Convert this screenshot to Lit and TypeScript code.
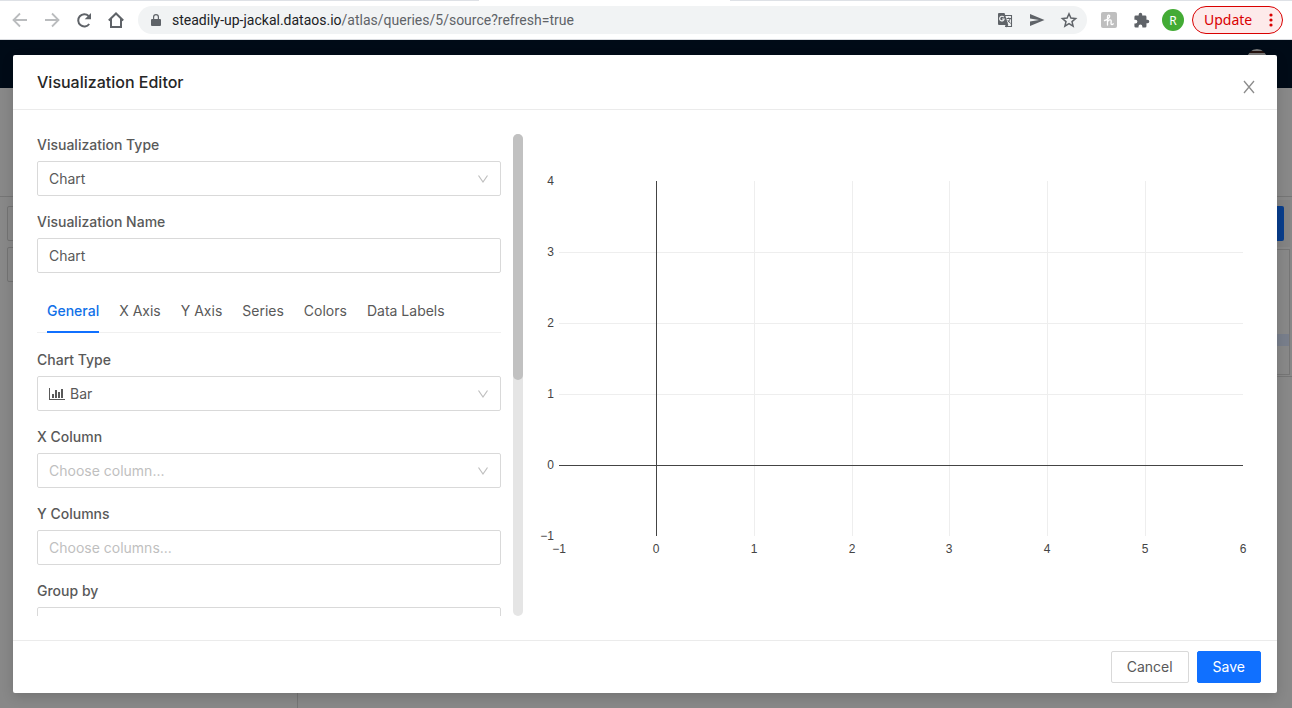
import { LitElement, html, svg, css } from "lit";
import { customElement, state } from "lit/decorators.js";

@customElement("browser-bar")
class BrowserBar extends LitElement {
  static styles = css`
    :host {
      display: block;
      font-family: "Noto Sans", sans-serif;
    }
    .bar {
      box-sizing: border-box;
      height: 40px;
      display: flex;
      align-items: center;
      padding: 1px 9px 0 10px;
      background: linear-gradient(90deg, #dee1e6 479px, #fff 479px 730px, #dee1e6 730px) 0 0 / 100% 1px no-repeat #fff;
      border-bottom: 1px solid #dadce0;
    }
    button {
      border: 0;
      background: none;
      padding: 0;
      margin: 0;
      font: inherit;
      color: #5f6368;
      display: flex;
      align-items: center;
      justify-content: center;
    }
    .nav {
      display: flex;
      gap: 12px;
    }
    .nav button,
    .tools button {
      width: 20px;
      height: 20px;
    }
    .nav .off {
      color: #babcbe;
    }
    .omnibox {
      flex: 1;
      min-width: 0;
      height: 28px;
      margin-left: 12px;
      border-radius: 14px;
      background: #f1f3f4;
      display: flex;
      align-items: center;
      padding: 0 8px 0 12px;
    }
    .url {
      flex: 1;
      min-width: 0;
      margin-left: 10px;
      font-family: Roboto, sans-serif;
      font-size: 14px;
      line-height: 20px;
      color: #5f6368;
      white-space: nowrap;
      overflow: hidden;
      text-decoration: none;
    }
    .host {
      color: #202124;
    }
    .actions {
      display: flex;
      gap: 12px;
    }
    .actions button {
      width: 20px;
      height: 20px;
    }
    .tools {
      display: flex;
      align-items: center;
      gap: 12px;
      margin-left: 12px;
    }
    .tools .avatar {
      width: 22px;
      height: 22px;
      margin-left: -1px;
      border-radius: 50%;
      background: #43ab35;
      color: #fff;
      font-size: 12px;
    }
    .tools .update {
      box-sizing: border-box;
      width: 91px;
      height: 28px;
      margin-left: -4px;
      padding: 0 9px 0 11px;
      justify-content: space-between;
      border: 1px solid #d90000;
      border-radius: 14px;
      background: #fdeaea;
      color: #d90000;
      font-size: 14px;
      line-height: 18px;
    }
  `;

  render() {
    return html`
      <div class="bar">
        <div class="nav">
          <button class="off" aria-label="Back">
            <svg width="20" height="20" viewBox="0 0 20 20" fill="none" stroke="currentColor" stroke-width="1.8"><path d="M17 10H4M10 3.5 3.5 10l6.500 6.500" /></svg>
          </button>
          <button class="off" aria-label="Forward">
            <svg width="20" height="20" viewBox="0 0 20 20" fill="none" stroke="currentColor" stroke-width="1.8"><path d="M3 10h13M10 3.500 16.500 10 10 16.500" /></svg>
          </button>
          <button aria-label="Reload">
            <svg width="20" height="20" viewBox="0 0 20 20"><path d="M15.200 14A6.100 6.100 0 1 1 14.600 6" fill="none" stroke="currentColor" stroke-width="2" /><path d="M17 3v6.300h-6.300z" fill="currentColor" /></svg>
          </button>
          <button aria-label="Home">
            <svg width="20" height="20" viewBox="0 0 20 20" fill="none" stroke="currentColor" stroke-width="2"><path d="M2.800 10.500 10 3.500l7.200 7M5 9v8h10V9" /></svg>
          </button>
        </div>
        <div class="omnibox">
          <svg width="12" height="14" viewBox="0 0 12 14" fill="#5f6368"><path d="M3 6V4a3 3 0 0 1 6 0v2h1a1 1 0 0 1 1 1v5a1 1 0 0 1-1 1H2a1 1 0 0 1-1-1V7a1 1 0 0 1 1-1zm1.200 0h3.600V4a1.800 1.800 0 0 0-3.600 0z" /></svg>
          <a class="url" href="#"><span class="host">steadily-up-jackal.dataos.io</span>/atlas/queries/5/source?refresh=true</a>
          <div class="actions">
            <button aria-label="Translate">
              <svg width="20" height="20" viewBox="0 0 20 20"><path d="M10 5.500h6.500v11H10" fill="none" stroke="currentColor" stroke-width="1.100" /><path d="M4 3h5.500l3.800 12H4a1 1 0 0 1-1-1V4a1 1 0 0 1 1-1zM10 15h3.300l-1.600 2.500z" fill="currentColor" /><path d="M8.800 7.200a2.300 2.300 0 1 0 .4 1.800H7" fill="none" stroke="#f1f3f4" stroke-width="1.200" /><path d="M11.600 8.500h4.400M13.700 7.500v1M15.200 8.500c-.3 1.700-1.300 2.900-2.400 3.900M12.700 10l2.800 3.500" fill="none" stroke="currentColor" /></svg>
            </button>
            <button aria-label="Send to device">
              <svg width="20" height="20" viewBox="0 0 20 20" fill="currentColor"><path d="M3 4 17.500 10 3 16v-4.600L12 10 3 8.600z" /></svg>
            </button>
            <button aria-label="Bookmark">
              <svg width="20" height="20" viewBox="0 0 20 20" fill="none" stroke="currentColor" stroke-width="1.500"><path d="m10 3.800 1.900 4.300 4.700.4-3.600 3.100 1.100 4.600-4.100-2.500-4.100 2.500L7 11.600 3.400 8.500l4.700-.4z" /></svg>
            </button>
          </div>
        </div>
        <div class="tools">
          <button aria-label="Honey">
            <svg width="16" height="16" viewBox="0 0 16 16"><rect width="16" height="16" rx="2" fill="#bfbfbf" /><path d="M3.500 8.500C6 8 8.800 6 8.700 4 8.500 2.600 6.500 2.800 6.500 5v8M6.600 9.800c.6-2.200 3.700-2.800 3.600-.6l-.2 2.300c0 1.400 1.600 1.300 2.200.3" fill="none" stroke="#fff" stroke-width="1.300" stroke-linecap="round" /></svg>
          </button>
          <button aria-label="Extensions">
            <svg width="17" height="17" viewBox="0 0 24 24" fill="currentColor"><path d="M20.500 11H19V7a2 2 0 0 0-2-2h-4V3.500a2.500 2.500 0 0 0-5 0V5H4a2 2 0 0 0-2 2v3.800h1.500a2.700 2.700 0 0 1 0 5.400H2V20a2 2 0 0 0 2 2h3.800v-1.500a2.700 2.700 0 0 1 5.400 0V22H17a2 2 0 0 0 2-2v-4h1.500a2.500 2.500 0 0 0 0-5z" /></svg>
          </button>
          <button class="avatar" aria-label="Profile">R</button>
          <button class="update">
            Update
            <svg width="4" height="14" viewBox="0 0 4 14" fill="currentColor"><circle cx="2" cy="2" r="1.600" /><circle cx="2" cy="7" r="1.600" /><circle cx="2" cy="12" r="1.600" /></svg>
          </button>
        </div>
      </div>
    `;
  }
}

@customElement("query-page")
class QueryPage extends LitElement {
  static styles = css`
    :host {
      display: flex;
      flex-direction: column;
      background: #888;
    }
    .navbar {
      height: 48px;
      background: #000b17;
      display: flex;
      justify-content: flex-end;
      align-items: flex-start;
      padding: 9px 25px 0 0;
      box-sizing: border-box;
    }
    .user {
      width: 20px;
      height: 20px;
      border-radius: 50%;
      background: linear-gradient(#777 2px, #24130f 2px 4px, #777 4px);
    }
    .title {
      height: 108px;
      border-bottom: 1px solid #757575;
    }
    .work {
      flex: 1;
      display: grid;
      grid-template-columns: 298px 1fr;
    }
    .schema {
      box-sizing: border-box;
      border-right: 1px solid #757575;
      padding: 9px 7px;
      display: flex;
      flex-direction: column;
      gap: 6px;
    }
    .field {
      box-sizing: border-box;
      height: 35px;
      border: 1px solid #737373;
      border-radius: 2px;
    }
    .actions {
      display: flex;
      justify-content: flex-end;
      margin: 3px 2px 2px 0;
      padding: 6px;
      background: #838383;
    }
    .run {
      width: 70px;
      height: 35px;
      border-radius: 2px;
      background: #083d8c;
    }
    .code {
      box-sizing: border-box;
      height: 126px;
      margin-right: 2px;
      border: 1px solid #757575;
      padding-top: 84px;
    }
    .line {
      height: 12px;
      background: #787e8b;
    }
    .results {
      margin-top: 1px;
      border-top: 1px solid #757575;
    }
  `;

  render() {
    return html`
      <div class="navbar"><div class="user"></div></div>
      <div class="title"></div>
      <div class="work">
        <div class="schema">
          <div class="field"></div>
          <div class="field"></div>
        </div>
        <div>
          <div class="actions"><div class="run"></div></div>
          <div class="code"><div class="line"></div></div>
          <div class="results"></div>
        </div>
      </div>
    `;
  }
}

@customElement("chart-preview")
class ChartPreview extends LitElement {
  static styles = css`
    :host {
      display: block;
      min-width: 0;
    }
    svg {
      display: block;
      width: 100%;
      height: 450px;
    }
    .grid {
      stroke: #eee;
      shape-rendering: crispEdges;
    }
    .zero {
      stroke: #444;
      shape-rendering: crispEdges;
    }
    .tick {
      font: 12px "Liberation Sans", sans-serif;
      fill: #444;
    }
    .x {
      text-anchor: middle;
    }
    .y {
      text-anchor: end;
    }
  `;

  @state() private width = 730;

  private observer = new ResizeObserver(([entry]) => {
    this.width = Math.round(entry.contentRect.width);
  });

  connectedCallback() {
    super.connectedCallback();
    this.observer.observe(this);
  }

  disconnectedCallback() {
    this.observer.disconnect();
    super.disconnectedCallback();
  }

  render() {
    const left = 36;
    const right = this.width - 10;
    const top = 47;
    const bottom = 402;
    const x = (v: number) => left + Math.floor(((v + 1) / 7) * (right - left));
    const y = (v: number) => Math.round(bottom - ((v + 1) / 5) * (bottom - top));
    const label = (v: number) => String(v).replace("-", "\u2212");
    const vline = (v: number, kind: string) =>
      svg`<line class=${kind} x1=${x(v)} x2=${x(v)} y1=${top} y2=${bottom} />`;
    const hline = (v: number, kind: string) =>
      svg`<line class=${kind} x1=${left} x2=${right} y1=${y(v) + 0.5} y2=${y(v) + 0.5} />`;
    return html`
      <svg role="img" aria-label="Chart preview">
        ${[1, 2, 3, 4, 5].map((v) => vline(v, "grid"))}
        ${[1, 2, 3].map((v) => hline(v, "grid"))}
        ${vline(0, "zero")} ${hline(0, "zero")}
        ${[-1, 0, 1, 2, 3, 4, 5, 6].map(
          (v) => svg`<text class="tick x" x=${x(v)} y=${bottom + 17}>${label(v)}</text>`
        )}
        ${[-1, 0, 1, 2, 3, 4].map(
          (v) => svg`<text class="tick y" x=${left - 5} y=${y(v) + 4}>${label(v)}</text>`
        )}
      </svg>
    `;
  }
}

const chevron = html`<svg class="chevron" width="12" height="12" viewBox="0 0 12 12" fill="none" stroke="#bfbfbf" stroke-width="1.200"><path d="m1.500 2.500 4.500 6.500 4.500-6.500" /></svg>`;

const barIcon = html`<svg class="kind" width="16" height="14" viewBox="0 0 16 14" fill="#595959"><path d="M0 1h1v11h15v1H0zM3 7h2v4H3zM6 3h2v8H6zM9 5h2v6H9zM12 2h2v9h-2z" /></svg>`;

@customElement("visualization-editor")
class VisualizationEditor extends LitElement {
  static styles = css`
    :host {
      display: flex;
      flex-direction: column;
      background: #fff;
      border-radius: 2px;
      box-shadow: 0 4px 12px rgba(0, 0, 0, 0.15);
      font: 14px/21px Inter, sans-serif;
      color: #595959;
    }
    header {
      display: flex;
      align-items: center;
      justify-content: space-between;
      height: 54px;
      padding: 0 22px 0 24px;
      border-bottom: 1px solid #ebebeb;
    }
    h1 {
      margin: 0;
      font-size: 16px;
      line-height: 22px;
      font-weight: 500;
      color: #262626;
    }
    button {
      font: inherit;
      color: inherit;
      margin: 0;
      padding: 0;
      border: 0;
      background: none;
    }
    .close {
      display: flex;
      padding-top: 9px;
    }
    .body {
      flex: 1;
      min-height: 0;
      display: grid;
      grid-template-columns: 2fr 3fr;
      padding: 24px;
    }
    .left {
      min-height: 0;
      display: grid;
      grid-template-columns: 1fr 10px;
      grid-template-rows: minmax(0, 1fr);
      gap: 12px;
    }
    .form {
      overflow-y: auto;
      scrollbar-width: none;
    }
    .track {
      border-radius: 5px;
      background: #e5e5e5;
    }
    .thumb {
      height: 51%;
      border-radius: 5px;
      background: #c1c1c1;
    }
    .item {
      display: grid;
      gap: 6px;
      margin-bottom: 15px;
    }
    label {
      font-weight: 500;
    }
    .control {
      display: grid;
      align-items: center;
    }
    .control > * {
      grid-area: 1 / 1;
    }
    input,
    select {
      appearance: none;
      box-sizing: border-box;
      width: 100%;
      height: 35px;
      margin: 0;
      padding: 0 11px;
      border: 1px solid #d9d9d9;
      border-radius: 2px;
      background: #fff;
      font: inherit;
      color: #595959;
      outline: 0;
    }
    .with-icon {
      padding-left: 32px;
    }
    .empty,
    input::placeholder {
      color: #bfbfbf;
    }
    .chevron {
      justify-self: end;
      margin-right: 12px;
      pointer-events: none;
    }
    .kind {
      margin-left: 12px;
      pointer-events: none;
    }
    .tabs {
      display: flex;
      gap: 20px;
      padding-left: 10px;
      margin-bottom: 16px;
      box-shadow: inset 0 -1px #f0f0f0;
    }
    .tab {
      padding: 12px 0;
      white-space: nowrap;
    }
    .active {
      color: #1070e8;
      font-weight: 500;
      box-shadow: inset 0 -2px #1070ff;
    }
    footer {
      display: flex;
      justify-content: flex-end;
      gap: 8px;
      padding: 10px 16px;
      border-top: 1px solid #ebebeb;
    }
    .btn {
      box-sizing: border-box;
      height: 32px;
      padding: 0 15px;
      border: 1px solid #d9d9d9;
      border-radius: 2px;
      line-height: 20px;
    }
    .primary {
      background: #1070ff;
      border-color: #1070ff;
      color: #fff;
    }
  `;

  private tabs = ["General", "X Axis", "Y Axis", "Series", "Colors", "Data Labels"];

  @state() private active = "General";

  render() {
    return html`
      <header>
        <h1>Visualization Editor</h1>
        <button class="close" aria-label="Close">
          <svg width="12" height="14" viewBox="0 0 12 14" fill="none" stroke="#8c8c8c" stroke-width="1.300"><path d="m1 1 10 12M11 1 1 13" /></svg>
        </button>
      </header>
      <div class="body">
        <div class="left">
          <div class="form">
            <div class="item">
              <label for="type">Visualization Type</label>
              <div class="control">
                <select id="type"><option>Chart</option></select>
                ${chevron}
              </div>
            </div>
            <div class="item">
              <label for="name">Visualization Name</label>
              <input id="name" type="text" .value=${"Chart"} />
            </div>
            <div class="tabs" role="tablist">
              ${this.tabs.map(
                (tab) => html`<button
                  class=${tab === this.active ? "tab active" : "tab"}
                  role="tab"
                  aria-selected=${tab === this.active}
                  @click=${() => (this.active = tab)}
                >${tab}</button>`
              )}
            </div>
            <div class="item">
              <label for="chart">Chart Type</label>
              <div class="control">
                <select id="chart" class="with-icon"><option>Bar</option></select>
                ${barIcon} ${chevron}
              </div>
            </div>
            <div class="item">
              <label for="xcol">X Column</label>
              <div class="control">
                <select id="xcol" class="empty"><option>Choose column...</option></select>
                ${chevron}
              </div>
            </div>
            <div class="item">
              <label for="ycols">Y Columns</label>
              <input id="ycols" type="text" placeholder="Choose columns..." />
            </div>
            <div class="item">
              <label for="group">Group by</label>
              <div class="control">
                <select id="group"></select>
                ${chevron}
              </div>
            </div>
          </div>
          <div class="track"><div class="thumb"></div></div>
        </div>
        <chart-preview></chart-preview>
      </div>
      <footer>
        <button class="btn">Cancel</button>
        <button class="btn primary">Save</button>
      </footer>
    `;
  }
}

@customElement("app-root")
class AppRoot extends LitElement {
  static styles = css`
    :host {
      display: flex;
      flex-direction: column;
      height: 100vh;
    }
    .stage {
      flex: 1;
      min-height: 0;
      display: grid;
      grid-template: minmax(0, 1fr) / minmax(0, 1fr);
    }
    .stage > * {
      grid-area: 1 / 1;
    }
    .dialog {
      margin: 15px 15px 15px 13px;
    }
  `;

  render() {
    return html`
      <browser-bar></browser-bar>
      <div class="stage">
        <query-page></query-page>
        <visualization-editor class="dialog" role="dialog" aria-label="Visualization Editor"></visualization-editor>
      </div>
    `;
  }
}
